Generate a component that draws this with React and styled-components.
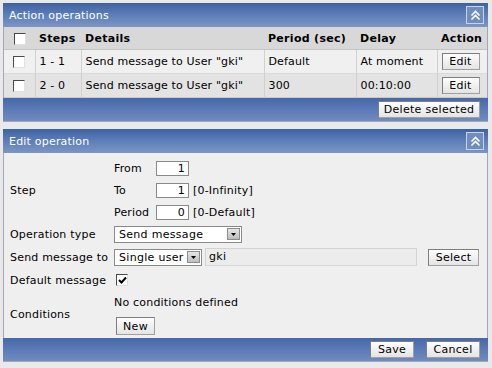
import { createGlobalStyle, styled } from "styled-components";

const GlobalStyle = createGlobalStyle`
    html, body {
        margin: 0;
        padding: 0;
        background: #e9e9e9;
    }
    body {
        font-family: "DejaVu Sans", Verdana, sans-serif;
        font-size: 11px;
        color: #000;
    }
`;

const actions = [
    { steps: "1 - 1", details: 'Send message to User "gki"', period: "Default", delay: "At moment" },
    { steps: "2 - 0", details: 'Send message to User "gki"', period: "300", delay: "00:10:00" },
];

const CollapseIcon = () => (
    <Collapse>
        <svg width="11" height="11" viewBox="0 0 11 11">
            <path d="M1.5 5.5 L5.5 1.5 L9.5 5.5 M1.5 9.5 L5.5 5.5 L9.5 9.5" stroke="#fff" strokeWidth="1.6" fill="none" />
        </svg>
    </Collapse>
);

const Check = ({ checked }) => (
    <CheckBox>
        {checked && (
            <svg width="9" height="9" viewBox="0 0 9 9">
                <path d="M1 4 L3.5 6.5 L8 1.5" stroke="#000" strokeWidth="2" fill="none" />
            </svg>
        )}
    </CheckBox>
);

const Select = ({ width, children }) => (
    <SelectBox $width={width}>
        <span>{children}</span>
        <Arrow>
            <svg width="5" height="3" viewBox="0 0 5 3">
                <path d="M0 0 H5 L2.5 3 Z" fill="#000" />
            </svg>
        </Arrow>
    </SelectBox>
);

const App = () => {
    return (
        <Page>
            <GlobalStyle />

            <Panel>
                <Header>
                    <span>Action operations</span>
                    <CollapseIcon />
                </Header>
                <Table>
                    <colgroup>
                        <col style={{ width: 31 }} />
                        <col style={{ width: 46 }} />
                        <col style={{ width: 183 }} />
                        <col style={{ width: 92 }} />
                        <col style={{ width: 81 }} />
                        <col />
                    </colgroup>
                    <thead>
                        <tr>
                            <Th $center>
                                <Check />
                            </Th>
                            <Th>Steps</Th>
                            <Th>Details</Th>
                            <Th>Period (sec)</Th>
                            <Th>Delay</Th>
                            <Th>Action</Th>
                        </tr>
                    </thead>
                    <tbody>
                        {actions.map((a, i) => (
                            <Row key={a.steps} $odd={i % 2 === 1}>
                                <Td $center>
                                    <Check />
                                </Td>
                                <Td>{a.steps}</Td>
                                <Td>{a.details}</Td>
                                <Td>{a.period}</Td>
                                <Td>{a.delay}</Td>
                                <Td>
                                    <Button $width={38}>Edit</Button>
                                </Td>
                            </Row>
                        ))}
                    </tbody>
                </Table>
                <Footer>
                    <Button $width={102}>Delete selected</Button>
                </Footer>
            </Panel>

            <Panel>
                <Header>
                    <span>Edit operation</span>
                    <CollapseIcon />
                </Header>
                <Form>
                    <Label>Step</Label>
                    <StepGrid>
                        <span>From</span>
                        <NumInput>1</NumInput>
                        <span />
                        <span>To</span>
                        <NumInput>1</NumInput>
                        <Hint>[0-Infinity]</Hint>
                        <span>Period</span>
                        <NumInput>0</NumInput>
                        <Hint>[0-Default]</Hint>
                    </StepGrid>

                    <Label>Operation type</Label>
                    <Value>
                        <Select width={128}>Send message</Select>
                    </Value>

                    <Label>Send message to</Label>
                    <Value>
                        <Select width={88}>Single user</Select>
                        <TextInput>gki</TextInput>
                        <Button $width={51} $height={17}>Select</Button>
                    </Value>

                    <Label>Default message</Label>
                    <Value $pad={2}>
                        <Check checked />
                    </Value>

                    <Label>Conditions</Label>
                    <Conditions>
                        <span>No conditions defined</span>
                        <Button $width={39} $height={18}>New</Button>
                    </Conditions>
                </Form>
                <Footer>
                    <Button $width={44}>Save</Button>
                    <Button $width={54}>Cancel</Button>
                </Footer>
            </Panel>
        </Page>
    );
};

const Page = styled.div`
    display: flex;
    flex-direction: column;
    gap: 7px;
    padding: 3px 4px 5px 3px;
`;

const Panel = styled.section`
    border: 1px solid #a3a8b4;
    border-top: none;
    background: #efefef;
`;

const Header = styled.div`
    display: flex;
    justify-content: space-between;
    align-items: center;
    height: 24px;
    padding: 0 4px 0 6px;
    margin: 0 -1px;
    background: linear-gradient(#3d62a3, #5b7cb6 45%, #7c96c5);
    color: #fff;
    font-size: 11px;
    letter-spacing: 0.2px;
`;

const Collapse = styled.div`
    display: flex;
    align-items: center;
    justify-content: center;
    width: 16px;
    height: 16px;
    border: 1px solid #c8d4ec;
    background: #6f8dc3;
`;

const Table = styled.table`
    width: 100%;
    border-collapse: collapse;
    table-layout: fixed;
`;

const Th = styled.th`
    height: 22px;
    padding: 0 4px;
    background: #d8d8d8;
    text-align: ${(p) => (p.$center ? "center" : "left")};
    font-weight: bold;
    letter-spacing: 0.3px;
    border-bottom: 1px solid #c4c4c4;
`;

const Row = styled.tr`
    background: ${(p) => (p.$odd ? "#e3e3e3" : "#f0f0f0")};
    border-bottom: 1px solid ${(p) => (p.$odd ? "#c9c9c9" : "#dadada")};
`;

const Td = styled.td`
    height: 23px;
    padding: 0 4px;
    text-align: ${(p) => (p.$center ? "center" : "left")};
    border-left: 1px solid #d0d0d0;
    letter-spacing: 0.15px;
    &:first-child {
        border-left: none;
    }
    white-space: nowrap;
`;

const CheckBox = styled.span`
    display: inline-flex;
    align-items: center;
    justify-content: center;
    box-sizing: border-box;
    width: 12px;
    height: 12px;
    vertical-align: middle;
    background: #fff;
    border: 1px solid #e0e0e0;
    border-top-color: #4a4a4a;
    border-left-color: #4a4a4a;
`;

const Button = styled.button`
    box-sizing: border-box;
    width: ${(p) => p.$width}px;
    height: ${(p) => p.$height || 17}px;
    padding: 0;
    font-family: inherit;
    font-size: 11px;
    letter-spacing: 0.3px;
    color: #000;
    background: linear-gradient(#fdfdfd, #e4e4e4);
    border: 1px solid #7d7d7d;
    border-right-color: #a0a0a0;
    border-bottom-color: #a0a0a0;
`;

const Footer = styled.div`
    display: flex;
    justify-content: flex-end;
    align-items: center;
    gap: 12px;
    height: 23px;
    padding: 0 8px;
    margin: 0 -1px;
    background: linear-gradient(#4568a8, #5b7bb6 50%, #6f8cc0);
`;

const Form = styled.div`
    display: grid;
    grid-template-columns: 104px 1fr;
    align-items: center;
    row-gap: 5px;
    padding: 8px 8px 3px 6px;
    letter-spacing: 0.15px;
`;

const Label = styled.div`
    letter-spacing: 0.2px;
`;

const Value = styled.div`
    display: flex;
    align-items: center;
    gap: 3px;
    min-height: 18px;
    padding-left: ${(p) => p.$pad || 0}px;
`;

const StepGrid = styled.div`
    display: grid;
    grid-template-columns: 38px 33px auto;
    grid-auto-rows: 15px;
    align-items: center;
    column-gap: 4px;
    row-gap: 7px;
`;

const NumInput = styled.div`
    box-sizing: border-box;
    width: 33px;
    height: 15px;
    padding: 0 3px;
    text-align: right;
    line-height: 13px;
    background: #fff;
    border: 1px solid #8a8a8a;
`;

const Hint = styled.span`
    letter-spacing: 0.2px;
`;

const SelectBox = styled.div`
    display: flex;
    align-items: center;
    justify-content: space-between;
    box-sizing: border-box;
    width: ${(p) => p.$width}px;
    height: 17px;
    padding: 0 1px 0 4px;
    background: #fff;
    border: 1px solid #8a8a8a;
    letter-spacing: 0.3px;
`;

const Arrow = styled.span`
    display: flex;
    align-items: center;
    justify-content: center;
    width: 13px;
    height: 12px;
    background: linear-gradient(#e6e6e6, #bdbdbd);
    border: 1px solid #8c8c8c;
    box-sizing: border-box;
`;

const TextInput = styled.div`
    flex: 1;
    box-sizing: border-box;
    height: 18px;
    margin-right: 8px;
    padding: 0 3px;
    line-height: 16px;
    border: 1px solid #d4d4d4;
    background: #ececec;
    letter-spacing: 0.3px;
`;

const Conditions = styled.div`
    display: flex;
    flex-direction: column;
    align-items: flex-start;
    gap: 8px;
    padding-top: 2px;
    line-height: 13px;
    letter-spacing: 0.2px;
    button {
        margin-left: 2px;
    }
`;

export default App;
